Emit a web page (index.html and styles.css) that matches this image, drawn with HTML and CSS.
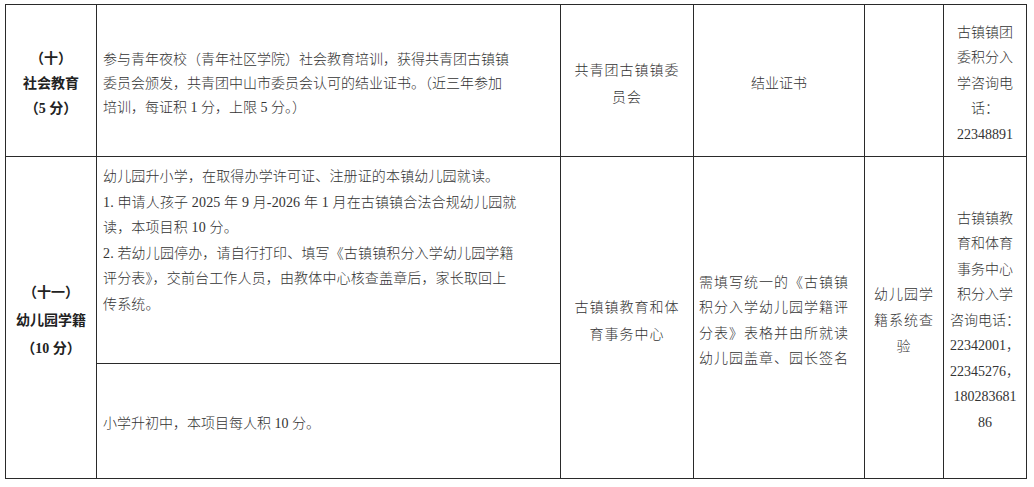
FILE: index.html
```html
<!DOCTYPE html>
<html lang="zh-CN">
<head>
<meta charset="utf-8">
<title>积分入学</title>
<link rel="stylesheet" href="styles.css">
</head>
<body>
<table class="grid">
  <colgroup>
    <col class="w1"><col class="w2"><col class="w3"><col class="w4"><col class="w5"><col class="w6">
  </colgroup>
  <tr class="r1">
    <td class="cat">（十）<br>社会教育<br>（5 分）</td>
    <td class="desc">参与青年夜校（青年社区学院）社会教育培训，获得共青团古镇镇<br>委员会颁发，共青团中山市委员会认可的结业证书。（近三年参加<br>培训，每证积 1 分，上限 5 分。）</td>
    <td class="ctr org">共青团古镇镇委<br>员会</td>
    <td class="ctr">结业证书</td>
    <td class="ctr"></td>
    <td class="ctr tel">古镇镇团<br>委积分入<br>学咨询电<br>话：<br>22348891</td>
  </tr>
  <tr class="r2">
    <td class="cat cat2" rowspan="2">（十一）<br>幼儿园学籍<br>（10 分）</td>
    <td class="desc top">幼儿园升小学，在取得办学许可证、注册证的本镇幼儿园就读。<br>1. 申请人孩子 2025 年 9 月-2026 年 1 月在古镇镇合法合规幼儿园就<br>读，本项目积 10 分。<br>2. 若幼儿园停办，请自行打印、填写《古镇镇积分入学幼儿园学籍<br>评分表》，交前台工作人员，由教体中心核查盖章后，家长取回上<br>传系统。</td>
    <td class="ctr org" rowspan="2">古镇镇教育和体<br>育事务中心</td>
    <td class="mat" rowspan="2">需填写统一的《古镇镇<br>积分入学幼儿园学籍评<br>分表》表格并由所就读<br>幼儿园盖章、园长签名</td>
    <td class="ctr way" rowspan="2">幼儿园学<br>籍系统查<br>验</td>
    <td class="ctr tel" rowspan="2">古镇镇教<br>育和体育<br>事务中心<br>积分入学<br>咨询电话：<br>22342001，<br>22345276，<br>180283681<br>86</td>
  </tr>
  <tr class="r3">
    <td class="desc">小学升初中，本项目每人积 10 分。</td>
  </tr>
</table>
</body>
</html>
```
FILE: styles.css
```css
html, body {
  background: #ffffff;
}
body {
  margin: 4px 0 0 5px;
  font-family: "Liberation Serif", "Noto Sans CJK SC", serif;
  font-size: 14px;
  color: #333333;
}
.grid {
  border-collapse: collapse;
  table-layout: fixed;
  width: 1021px;
}
.w1 { width: 91px; }
.w2 { width: 464px; }
.w3 { width: 133px; }
.w4 { width: 171px; }
.w5 { width: 79px; }
.w6 { width: 83px; }
.grid td {
  border: 1px solid #2a2a2a;
  padding: 6px 4px 0;
  vertical-align: middle;
  line-height: 24px;
  font-weight: 300;
  overflow: hidden;
}
.r1 { height: 152px; }
.r2 { height: 207px; }
.r3 { height: 115px; }
.cat {
  text-align: center;
  font-weight: 700 !important;
  color: #222222;
  line-height: 25px !important;
  padding: 6px 0 0 !important;
}
.cat2 {
  line-height: 28px !important;
}
.desc {
  padding-left: 6px !important;
  letter-spacing: 0;
  white-space: nowrap;
}
.desc.top {
  vertical-align: top !important;
  padding-top: 7px !important;
  line-height: 25.5px !important;
  letter-spacing: 0.15px;
}
.ctr {
  text-align: center;
}
.org {
  letter-spacing: 1px;
  line-height: 27px !important;
}
.mat {
  padding-left: 5px !important;
  letter-spacing: 1px;
  line-height: 25.5px !important;
  white-space: nowrap;
}
.way {
  letter-spacing: 1px;
  line-height: 26px !important;
}
.tel {
  line-height: 25.5px !important;
  padding: 6px 2px 0 !important;
  white-space: nowrap;
}
```
